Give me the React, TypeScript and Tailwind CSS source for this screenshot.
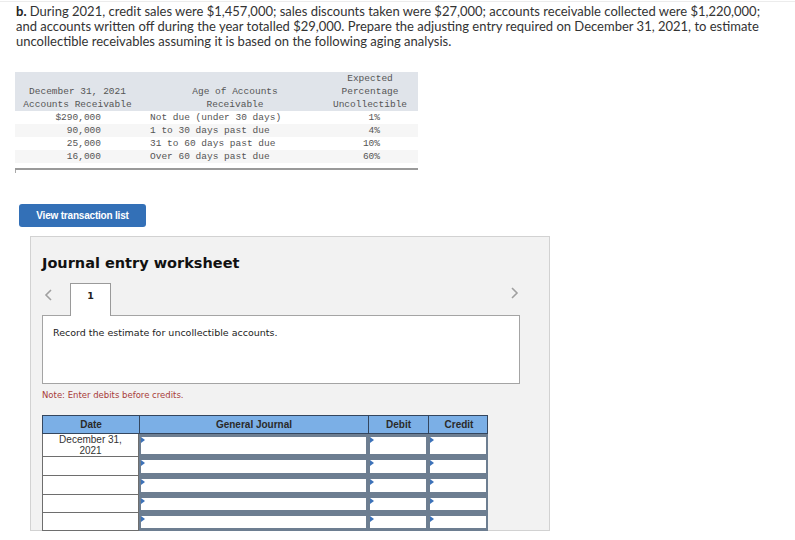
import React from "react";

const agingRows = [
  ["$290,000", "Not due (under 30 days)", "1%"],
  ["90,000", "1 to 30 days past due", "4%"],
  ["25,000", "31 to 60 days past due", "10%"],
  ["16,000", "Over 60 days past due", "60%"],
];

function InputCell({ h }: { h: string }) {
  return (
    <div className={`relative bg-white border-x-2 border-y-[3px] border-[#6d7e91] ${h}`}>
      <div className="absolute left-0 top-0 w-0 h-0 border-t-[3px] border-b-[3px] border-l-[4px] border-t-transparent border-b-transparent border-l-[#3d72b8]" />
    </div>
  );
}

function Chevron({ dir }: { dir: "left" | "right" }) {
  return (
    <svg width="9" height="12" viewBox="0 0 9 12" fill="none">
      <path
        d={dir === "left" ? "M7 1 L2 6 L7 11" : "M2 1 L7 6 L2 11"}
        stroke="#a0a0a0"
        strokeWidth="1.6"
      />
    </svg>
  );
}

export default function App() {
  const rowHeights = ["h-[23px]", "h-[19px]", "h-[19px]", "h-[18px]", "h-[18px]"];
  return (
    <div className="w-[795px] h-[540px] bg-white overflow-hidden">
      <div className="h-[1px] bg-[#ececec] mt-[1px]" />
      <p
        className="pl-[16px] pr-[20px] pt-[2px] text-[13px] leading-[15px] text-[#333]"
        style={{ fontFamily: "Lato, 'Open Sans', sans-serif" }}
      >
        <b className="text-[#222]">b.</b> During 2021, credit sales were $1,457,000; sales discounts taken were $27,000; accounts receivable collected were $1,220,000; and accounts written off during the year totalled $29,000. Prepare the adjusting entry required on December 31, 2021, to estimate uncollectible receivables assuming it is based on the following aging analysis.
      </p>

      <div
        className="ml-[15px] mt-[23px] w-[403px] text-[9.5px] leading-[13px] text-[#555]"
        style={{ fontFamily: "'Liberation Mono', 'DejaVu Sans Mono', monospace" }}
      >
        <div className="grid grid-cols-[125px_190px_88px] bg-[#e0e4ea]">
          <div className="flex flex-col justify-end text-center">
            <span>December 31, 2021</span>
            <span>Accounts Receivable</span>
          </div>
          <div className="flex flex-col justify-end text-center">
            <span>Age of Accounts</span>
            <span>Receivable</span>
          </div>
          <div className="flex flex-col justify-end text-center pr-[8px]">
            <span>Expected</span>
            <span>Percentage</span>
            <span>Uncollectible</span>
          </div>
        </div>
        {agingRows.map((r, i) => (
          <div
            key={i}
            className={`grid grid-cols-[125px_190px_88px] ${i % 2 === 1 ? "bg-[#f6f6f6]" : "bg-white"}`}
          >
            <div className="text-right pr-[39px]">{r[0]}</div>
            <div className="pl-[10px]">{r[1]}</div>
            <div className="text-right pr-[38px]">{r[2]}</div>
          </div>
        ))}
        <div className="mt-[5px] h-[2px] bg-[#9a9a9a]" />
        <div className="w-[1px] h-[3px] bg-[#aaa]" />
      </div>

      <button
        className="block ml-[19px] mt-[31px] w-[127px] h-[23px] rounded-[3px] bg-[#3370b7] text-white text-[10px] font-bold tracking-[-0.2px]"
        style={{ fontFamily: "'Liberation Sans', Arial, sans-serif" }}
      >
        View transaction list
      </button>

      <div
        className="ml-[30px] mt-[9px] w-[520px] h-[295px] bg-[#f2f2f2] border border-[#d2d2d2] pl-[11px] pr-[29px]"
        style={{ fontFamily: "'DejaVu Sans', Verdana, sans-serif" }}
      >
        <h2 className="mt-[17px] text-[14.5px] leading-[18px] font-bold text-[#111]">
          Journal entry worksheet
        </h2>
        <div className="mt-[11px] flex items-end h-[33px]">
          <div className="w-[28px] pl-[2px] pb-[15px]">
            <Chevron dir="left" />
          </div>
          <div className="w-[41px] h-[33px] bg-white border border-b-0 border-[#9a9a9a] relative z-10 flex justify-center pt-[5px] text-[9.5px] font-bold text-[#222]">
            1
          </div>
          <div className="flex-1" />
          <div className="pb-[17px] pr-[1px]">
            <Chevron dir="right" />
          </div>
        </div>
        <div className="-mt-[1px] h-[69px] bg-white border border-[#a4a4a4] pl-[10px] pt-[10px] text-[9.5px] text-[#222] w-[478px]">
          Record the estimate for uncollectible accounts.
        </div>
        <p className="mt-[5px] text-[8.5px] leading-[12px] text-[#a83c3a]">
          Note: Enter debits before credits.
        </p>
        <div
          className="mt-[14px] w-[446px]"
          style={{ fontFamily: "'Liberation Sans', Arial, sans-serif" }}
        >
          <div className="grid grid-cols-[97px_229px_60px_60px] h-[19px] bg-[#7bafe6] border border-[#34465e] text-[10px] font-bold text-[#2a2a2a]">
            <div className="flex items-center justify-center border-r border-[#34465e]">Date</div>
            <div className="flex items-center justify-center border-r border-[#34465e]">General Journal</div>
            <div className="flex items-center justify-center border-r border-[#34465e]">Debit</div>
            <div className="flex items-center justify-center">Credit</div>
          </div>
          {rowHeights.map((h, i) => (
            <div key={i} className="grid grid-cols-[97px_229px_60px_60px]">
              <div className={`bg-white border border-t-0 border-[#6e6e6e] ${h} text-center text-[10px] leading-[11px] text-[#333]`}>
                {i === 0 ? (
                  <>
                    December 31,
                    <br />
                    2021
                  </>
                ) : null}
              </div>
              <InputCell h={h} />
              <InputCell h={h} />
              <InputCell h={h} />
            </div>
          ))}
        </div>
      </div>
    </div>
  );
}
